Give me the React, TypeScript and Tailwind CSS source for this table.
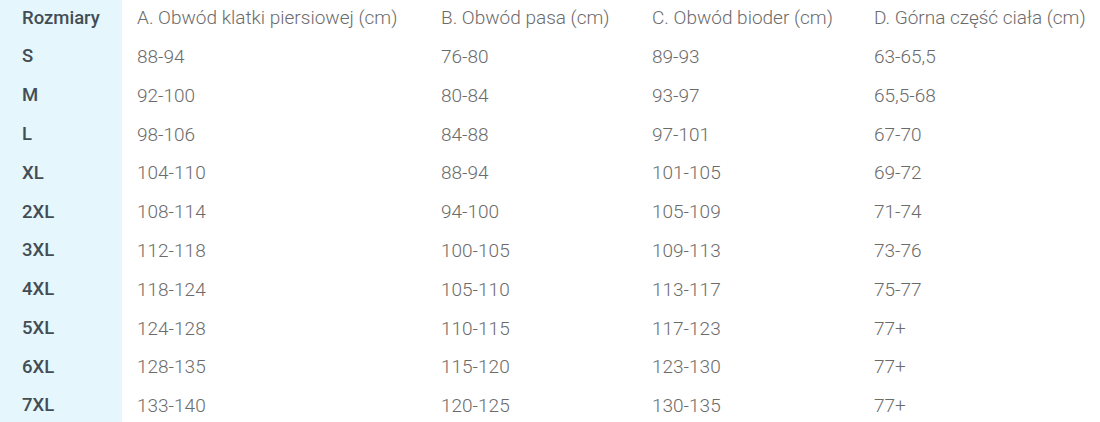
const head = ['A. Obwód klatki piersiowej (cm)', 'B. Obwód pasa (cm)', 'C. Obwód bioder (cm)', 'D. Górna część ciała (cm)']

const rows: [string, string, string, string, string][] = [
  ['S', '88-94', '76-80', '89-93', '63-65,5'],
  ['M', '92-100', '80-84', '93-97', '65,5-68'],
  ['L', '98-106', '84-88', '97-101', '67-70'],
  ['XL', '104-110', '88-94', '101-105', '69-72'],
  ['2XL', '108-114', '94-100', '105-109', '71-74'],
  ['3XL', '112-118', '100-105', '109-113', '73-76'],
  ['4XL', '118-124', '105-110', '113-117', '75-77'],
  ['5XL', '124-128', '110-115', '117-123', '77+'],
  ['6XL', '128-135', '115-120', '123-130', '77+'],
  ['7XL', '133-140', '120-125', '130-135', '77+'],
]

export default function App() {
  const all = [['Rozmiary', ...head], ...rows]
  return (
    <div className="w-[1100px] h-[422px] overflow-hidden bg-white">
      <div className="-mt-[1px] grid grid-cols-[122px_304px_211px_222px_1fr]">
        {all.map((r, i) => (
          <div key={i} className="contents">
            <div className="h-[38.8px] flex items-center pl-[22px] bg-[#e5f6fd] text-[#434d55] text-[18.5px] font-medium font-['Roboto',sans-serif]">
              {r[0]}
            </div>
            {r.slice(1).map((c, j) => (
              <div key={j} className="h-[38.8px] flex items-center pl-[15px] text-[#6b6b6b] text-[19px] font-light font-['Roboto',sans-serif] whitespace-nowrap">
                {c}
              </div>
            ))}
          </div>
        ))}
      </div>
    </div>
  )
}
